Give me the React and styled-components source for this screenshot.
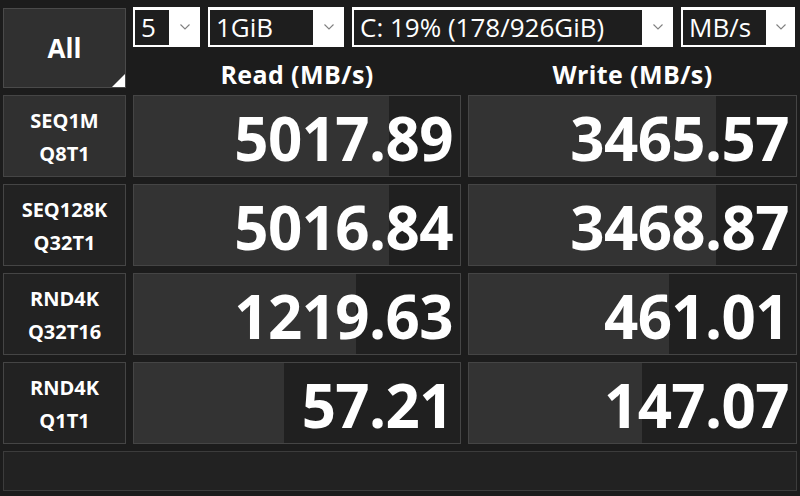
import React from "react";
import styled, { createGlobalStyle } from "styled-components";

const GlobalStyle = createGlobalStyle`
  html, body {
    margin: 0;
    padding: 0;
    background: #1c1c1c;
  }
  body {
    font-family: "Open Sans", "Noto Sans", sans-serif;
    color: #ffffff;
  }
`;

const Window = styled.div`
  width: 800px;
  height: 496px;
  box-sizing: border-box;
  padding: 7px 3px 4px 3px;
  background: #1c1c1c;
  display: flex;
  flex-direction: column;
  gap: 7px;
`;

const Grid = styled.div`
  display: grid;
  grid-template-columns: 123px 328px 329px;
  column-gap: 7px;
  row-gap: 7px;
  grid-template-rows: 81px repeat(4, 82px);
`;

const AllButton = styled.button`
  position: relative;
  margin: 1px 0 0 0;
  padding: 0;
  height: 80px;
  box-sizing: border-box;
  background: #303030;
  border: 1px solid #4a4a4a;
  color: #fff;
  font-family: "Open Sans", sans-serif;
  font-weight: 700;
  font-size: 26px;
  cursor: pointer;

  &::after {
    content: "";
    position: absolute;
    right: 0;
    bottom: 0;
    width: 0;
    height: 0;
    border-style: solid;
    border-width: 0 0 13px 13px;
    border-color: transparent transparent #ffffff transparent;
  }
`;

const TopRight = styled.div`
  grid-column: 2 / 4;
  display: flex;
  flex-direction: column;
`;

const SelectRow = styled.div`
  display: flex;
  gap: 8px;
  height: 40px;
`;

const Select = styled.div`
  width: ${(p) => p.$w}px;
  height: 40px;
  box-sizing: border-box;
  padding: 3px 0 2px 2px;
  background: #ffffff;
  display: flex;
  align-items: stretch;
`;

const SelectValue = styled.div`
  flex: 1;
  background: #1e1e1e;
  color: #fff;
  font-size: 26px;
  line-height: 35px;
  padding-left: 6px;
  white-space: nowrap;
  overflow: hidden;
`;

const Chevron = styled.div`
  width: ${(p) => p.$w || 31}px;
  display: flex;
  align-items: center;
  justify-content: center;
  padding-bottom: 2px;
`;

const HeaderRow = styled.div`
  display: grid;
  grid-template-columns: 328px 329px;
  column-gap: 7px;
  padding-top: 15px;
`;

const HeaderCell = styled.div`
  text-align: center;
  font-weight: 700;
  font-size: 25px;
  line-height: 24px;
  letter-spacing: 0.4px;
`;

const Label = styled.div`
  box-sizing: border-box;
  background: ${(p) => (p.$active ? "#303030" : "#222222")};
  border: 1px solid #454545;
  display: flex;
  flex-direction: column;
  align-items: center;
  justify-content: center;
  padding-top: 2px;
  font-weight: 700;
  font-size: 20px;
  line-height: 33px;
`;

const Meter = styled.div`
  box-sizing: border-box;
  border: 1px solid #454545;
  background: linear-gradient(
    to right,
    #333333 0,
    #333333 ${(p) => p.$fill}%,
    #202020 ${(p) => p.$fill}%,
    #202020 100%
  );
  display: flex;
  align-items: center;
  justify-content: flex-end;
  padding: 4px 7px 0 0;
  font-weight: 700;
  font-size: 60px;
  line-height: 60px;
  letter-spacing: -0.6px;
`;

const StatusBar = styled.div`
  height: 40px;
  box-sizing: border-box;
  border: 1px solid #3c3c3c;
  background: #222222;
`;

const ChevronIcon = () => (
  <svg width="10" height="6" viewBox="0 0 10 6">
    <polyline points="0.5,0.5 5,5 9.5,0.5" fill="none" stroke="#808080" strokeWidth="1.1" />
  </svg>
);

const rows = [
  { a: "SEQ1M", b: "Q8T1", read: 5017.89, write: 3465.57, active: true },
  { a: "SEQ128K", b: "Q32T1", read: 5016.84, write: 3468.87 },
  { a: "RND4K", b: "Q32T16", read: 1219.63, write: 461.01 },
  { a: "RND4K", b: "Q1T1", read: 57.21, write: 147.07 },
];

const fill = (v) => Math.min(100, Math.max(0, (Math.log10(v * 10) / 6) * 100));

export default function App() {
  return (
    <>
      <GlobalStyle />
      <Window>
        <Grid>
          <AllButton>All</AllButton>
          <TopRight>
            <SelectRow>
              <Select $w={67}>
                <SelectValue>5</SelectValue>
                <Chevron><ChevronIcon /></Chevron>
              </Select>
              <Select $w={136}>
                <SelectValue>1GiB</SelectValue>
                <Chevron><ChevronIcon /></Chevron>
              </Select>
              <Select $w={321}>
                <SelectValue>C: 19% (178/926GiB)</SelectValue>
                <Chevron><ChevronIcon /></Chevron>
              </Select>
              <Select $w={114}>
                <SelectValue>MB/s</SelectValue>
                <Chevron $w={29}><ChevronIcon /></Chevron>
              </Select>
            </SelectRow>
            <HeaderRow>
              <HeaderCell>Read (MB/s)</HeaderCell>
              <HeaderCell>Write (MB/s)</HeaderCell>
            </HeaderRow>
          </TopRight>
          {rows.map((r, i) => (
            <React.Fragment key={i}>
              <Label $active={r.active}>
                <span>{r.a}</span>
                <span>{r.b}</span>
              </Label>
              <Meter $fill={fill(r.read)}>{r.read.toFixed(2)}</Meter>
              <Meter $fill={fill(r.write)}>{r.write.toFixed(2)}</Meter>
            </React.Fragment>
          ))}
        </Grid>
        <StatusBar />
      </Window>
    </>
  );
}
